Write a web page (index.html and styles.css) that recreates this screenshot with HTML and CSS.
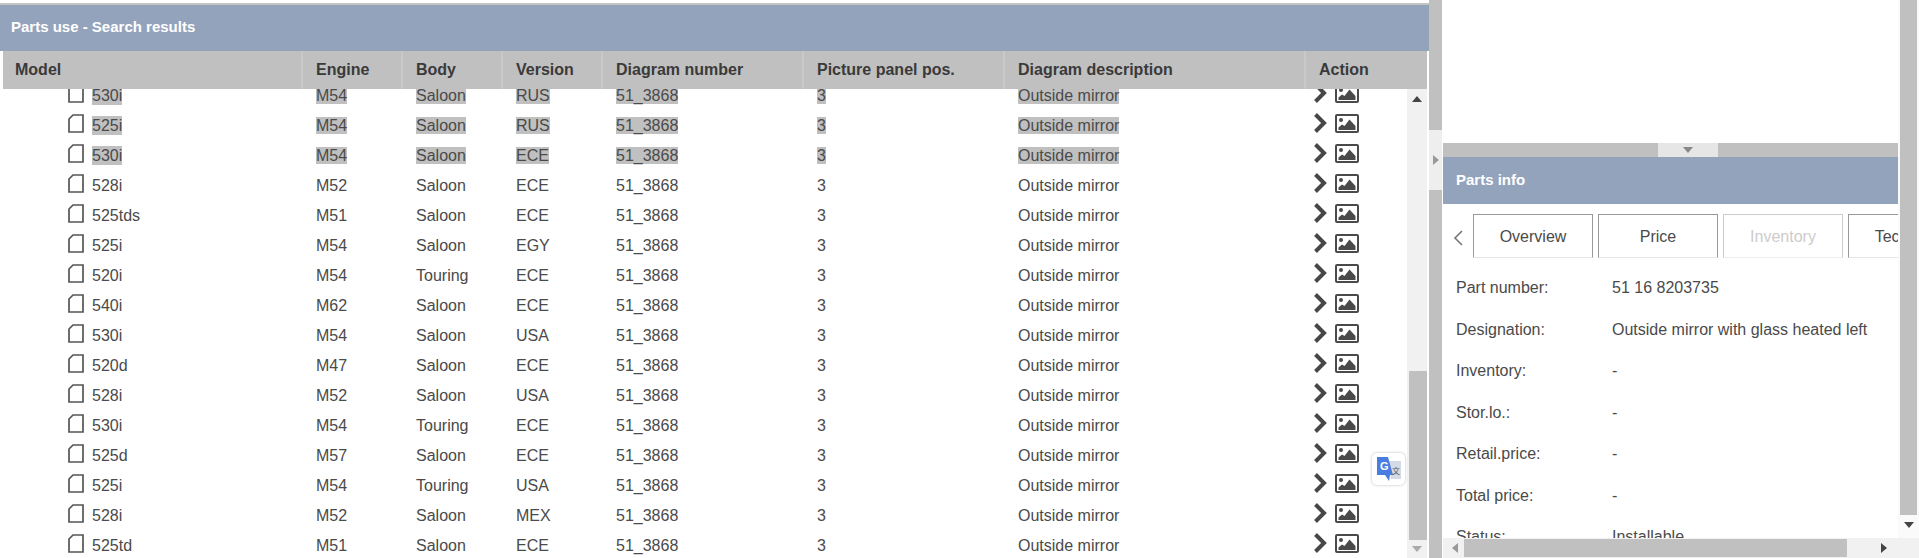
FILE: index.html
```html
<!DOCTYPE html>
<html lang="en">
<head>
  <meta charset="UTF-8" />
  <title>Parts use</title>
  <link rel="stylesheet" href="styles.css">
</head>
<body>
  <svg class="defs" width="0" height="0">
    <symbol id="doc" viewBox="0 0 16 19">
      <path d="M5 1H15V18H1V5Z" fill="none" stroke="#555" stroke-width="1.7" />
    </symbol>
    <symbol id="chev" viewBox="0 0 14 20">
      <path d="M2.5 1.5L11 10L2.5 18.5" fill="none" stroke="#474747" stroke-width="4" />
    </symbol>
    <symbol id="pic" viewBox="0 0 24 19">
      <rect x="1" y="1" width="22" height="17" rx="1" fill="#fff" stroke="#4a4a4a" stroke-width="2" />
      <circle cx="6" cy="6" r="2" fill="#4a4a4a" />
      <path d="M3.5 16V13.5L7 10.5L9.5 12L14.5 5.5L20.5 12V16Z" fill="#4a4a4a" />
    </symbol>
  </svg>

  <div class="pane-l">
    <div class="title">Parts use - Search results</div>
    <div class="head">
      <div class="h c-model">Model</div>
      <div class="h c-s">Engine</div>
      <div class="h c-s">Body</div>
      <div class="h c-s">Version</div>
      <div class="h c-m">Diagram number</div>
      <div class="h c-m">Picture panel pos.</div>
      <div class="h c-l">Diagram description</div>
      <div class="h">Action</div>
    </div>
    <div class="results">
      <div class="rows">
        <div class="row sel"><div class="c-model tree"><svg class="doc"><use href="#doc" /></svg><span>530i</span></div><div class="c-s"><span>M54</span></div><div class="c-s"><span>Saloon</span></div><div class="c-s"><span>RUS</span></div><div class="c-m"><span>51_3868</span></div><div class="c-m"><span>3</span></div><div class="c-l"><span>Outside mirror</span></div><div class="acts"><svg class="chev"><use href="#chev" /></svg><svg class="pic"><use href="#pic" /></svg></div></div>
        <div class="row sel"><div class="c-model tree"><svg class="doc"><use href="#doc" /></svg><span>525i</span></div><div class="c-s"><span>M54</span></div><div class="c-s"><span>Saloon</span></div><div class="c-s"><span>RUS</span></div><div class="c-m"><span>51_3868</span></div><div class="c-m"><span>3</span></div><div class="c-l"><span>Outside mirror</span></div><div class="acts"><svg class="chev"><use href="#chev" /></svg><svg class="pic"><use href="#pic" /></svg></div></div>
        <div class="row sel"><div class="c-model tree"><svg class="doc"><use href="#doc" /></svg><span>530i</span></div><div class="c-s"><span>M54</span></div><div class="c-s"><span>Saloon</span></div><div class="c-s"><span>ECE</span></div><div class="c-m"><span>51_3868</span></div><div class="c-m"><span>3</span></div><div class="c-l"><span>Outside mirror</span></div><div class="acts"><svg class="chev"><use href="#chev" /></svg><svg class="pic"><use href="#pic" /></svg></div></div>
        <div class="row"><div class="c-model tree"><svg class="doc"><use href="#doc" /></svg><span>528i</span></div><div class="c-s"><span>M52</span></div><div class="c-s"><span>Saloon</span></div><div class="c-s"><span>ECE</span></div><div class="c-m"><span>51_3868</span></div><div class="c-m"><span>3</span></div><div class="c-l"><span>Outside mirror</span></div><div class="acts"><svg class="chev"><use href="#chev" /></svg><svg class="pic"><use href="#pic" /></svg></div></div>
        <div class="row"><div class="c-model tree"><svg class="doc"><use href="#doc" /></svg><span>525tds</span></div><div class="c-s"><span>M51</span></div><div class="c-s"><span>Saloon</span></div><div class="c-s"><span>ECE</span></div><div class="c-m"><span>51_3868</span></div><div class="c-m"><span>3</span></div><div class="c-l"><span>Outside mirror</span></div><div class="acts"><svg class="chev"><use href="#chev" /></svg><svg class="pic"><use href="#pic" /></svg></div></div>
        <div class="row"><div class="c-model tree"><svg class="doc"><use href="#doc" /></svg><span>525i</span></div><div class="c-s"><span>M54</span></div><div class="c-s"><span>Saloon</span></div><div class="c-s"><span>EGY</span></div><div class="c-m"><span>51_3868</span></div><div class="c-m"><span>3</span></div><div class="c-l"><span>Outside mirror</span></div><div class="acts"><svg class="chev"><use href="#chev" /></svg><svg class="pic"><use href="#pic" /></svg></div></div>
        <div class="row"><div class="c-model tree"><svg class="doc"><use href="#doc" /></svg><span>520i</span></div><div class="c-s"><span>M54</span></div><div class="c-s"><span>Touring</span></div><div class="c-s"><span>ECE</span></div><div class="c-m"><span>51_3868</span></div><div class="c-m"><span>3</span></div><div class="c-l"><span>Outside mirror</span></div><div class="acts"><svg class="chev"><use href="#chev" /></svg><svg class="pic"><use href="#pic" /></svg></div></div>
        <div class="row"><div class="c-model tree"><svg class="doc"><use href="#doc" /></svg><span>540i</span></div><div class="c-s"><span>M62</span></div><div class="c-s"><span>Saloon</span></div><div class="c-s"><span>ECE</span></div><div class="c-m"><span>51_3868</span></div><div class="c-m"><span>3</span></div><div class="c-l"><span>Outside mirror</span></div><div class="acts"><svg class="chev"><use href="#chev" /></svg><svg class="pic"><use href="#pic" /></svg></div></div>
        <div class="row"><div class="c-model tree"><svg class="doc"><use href="#doc" /></svg><span>530i</span></div><div class="c-s"><span>M54</span></div><div class="c-s"><span>Saloon</span></div><div class="c-s"><span>USA</span></div><div class="c-m"><span>51_3868</span></div><div class="c-m"><span>3</span></div><div class="c-l"><span>Outside mirror</span></div><div class="acts"><svg class="chev"><use href="#chev" /></svg><svg class="pic"><use href="#pic" /></svg></div></div>
        <div class="row"><div class="c-model tree"><svg class="doc"><use href="#doc" /></svg><span>520d</span></div><div class="c-s"><span>M47</span></div><div class="c-s"><span>Saloon</span></div><div class="c-s"><span>ECE</span></div><div class="c-m"><span>51_3868</span></div><div class="c-m"><span>3</span></div><div class="c-l"><span>Outside mirror</span></div><div class="acts"><svg class="chev"><use href="#chev" /></svg><svg class="pic"><use href="#pic" /></svg></div></div>
        <div class="row"><div class="c-model tree"><svg class="doc"><use href="#doc" /></svg><span>528i</span></div><div class="c-s"><span>M52</span></div><div class="c-s"><span>Saloon</span></div><div class="c-s"><span>USA</span></div><div class="c-m"><span>51_3868</span></div><div class="c-m"><span>3</span></div><div class="c-l"><span>Outside mirror</span></div><div class="acts"><svg class="chev"><use href="#chev" /></svg><svg class="pic"><use href="#pic" /></svg></div></div>
        <div class="row"><div class="c-model tree"><svg class="doc"><use href="#doc" /></svg><span>530i</span></div><div class="c-s"><span>M54</span></div><div class="c-s"><span>Touring</span></div><div class="c-s"><span>ECE</span></div><div class="c-m"><span>51_3868</span></div><div class="c-m"><span>3</span></div><div class="c-l"><span>Outside mirror</span></div><div class="acts"><svg class="chev"><use href="#chev" /></svg><svg class="pic"><use href="#pic" /></svg></div></div>
        <div class="row"><div class="c-model tree"><svg class="doc"><use href="#doc" /></svg><span>525d</span></div><div class="c-s"><span>M57</span></div><div class="c-s"><span>Saloon</span></div><div class="c-s"><span>ECE</span></div><div class="c-m"><span>51_3868</span></div><div class="c-m"><span>3</span></div><div class="c-l"><span>Outside mirror</span></div><div class="acts"><svg class="chev"><use href="#chev" /></svg><svg class="pic"><use href="#pic" /></svg></div></div>
        <div class="row"><div class="c-model tree"><svg class="doc"><use href="#doc" /></svg><span>525i</span></div><div class="c-s"><span>M54</span></div><div class="c-s"><span>Touring</span></div><div class="c-s"><span>USA</span></div><div class="c-m"><span>51_3868</span></div><div class="c-m"><span>3</span></div><div class="c-l"><span>Outside mirror</span></div><div class="acts"><svg class="chev"><use href="#chev" /></svg><svg class="pic"><use href="#pic" /></svg></div></div>
        <div class="row"><div class="c-model tree"><svg class="doc"><use href="#doc" /></svg><span>528i</span></div><div class="c-s"><span>M52</span></div><div class="c-s"><span>Saloon</span></div><div class="c-s"><span>MEX</span></div><div class="c-m"><span>51_3868</span></div><div class="c-m"><span>3</span></div><div class="c-l"><span>Outside mirror</span></div><div class="acts"><svg class="chev"><use href="#chev" /></svg><svg class="pic"><use href="#pic" /></svg></div></div>
        <div class="row"><div class="c-model tree"><svg class="doc"><use href="#doc" /></svg><span>525td</span></div><div class="c-s"><span>M51</span></div><div class="c-s"><span>Saloon</span></div><div class="c-s"><span>ECE</span></div><div class="c-m"><span>51_3868</span></div><div class="c-m"><span>3</span></div><div class="c-l"><span>Outside mirror</span></div><div class="acts"><svg class="chev"><use href="#chev" /></svg><svg class="pic"><use href="#pic" /></svg></div></div>
      </div>
      <div class="vbar">
        <div class="arrow a-up"></div>
        <div class="track"><div class="thumb list-thumb"></div></div>
        <div class="arrow a-down"></div>
      </div>
      <div class="translate">
        <svg width="24" height="24" viewBox="0 0 24 24">
          <path d="M10 4H24V22H14Z" fill="#d5dbe6" />
          <path d="M0 0H11L16 18H13L12 24L8 18H0Z" fill="#4a7de0" />
          <text class="t-g" x="3" y="13">G</text>
          <text class="t-a" x="15" y="17">文</text>
        </svg>
      </div>
    </div>
  </div>

  <div class="strip"><div class="strip-handle"><div class="arrow a-right a-grey"></div></div></div>

  <div class="pane-r">
    <div class="upper"></div>
    <div class="splitter"><div class="split-handle"><div class="arrow a-down a-grey"></div></div></div>
    <div class="title small">Parts info</div>
    <div class="tabs">
      <svg class="back" width="12" height="16" viewBox="0 0 12 16"><path d="M10 1L3 8L10 15" fill="none" stroke="#777" stroke-width="1.6" /></svg>
      <div class="tab">Overview</div>
      <div class="tab">Price</div>
      <div class="tab off">Inventory</div>
      <div class="tab">Technical</div>
    </div>
    <div class="info">
      <div class="line"><div class="lbl">Part number:</div><div>51 16 8203735</div></div>
      <div class="line"><div class="lbl">Designation:</div><div>Outside mirror with glass heated left</div></div>
      <div class="line"><div class="lbl">Inventory:</div><div>-</div></div>
      <div class="line"><div class="lbl">Stor.lo.:</div><div>-</div></div>
      <div class="line"><div class="lbl">Retail.price:</div><div>-</div></div>
      <div class="line"><div class="lbl">Total price:</div><div>-</div></div>
      <div class="line"><div class="lbl">Status:</div><div>Installable</div></div>
    </div>
    <div class="hbar">
      <div class="arrow a-left"></div>
      <div class="hthumb"></div>
      <div class="arrow a-right"></div>
    </div>
  </div>

  <div class="vbar outer">
    <div class="track"><div class="thumb full"></div></div>
    <div class="arrow a-down"></div>
    <div class="corner"></div>
  </div>
</body>
</html>
```

FILE: styles.css
```css
* { box-sizing: border-box; }
body {
  margin: 0;
  display: flex;
  height: 558px;
  overflow: hidden;
  background: #fff;
  color: #4a4a4a;
  font-family: 'Liberation Sans', Arial, sans-serif;
  font-size: 16px;
}
.defs { display: block; width: 0; flex: none; }

.pane-l {
  width: 1429px;
  flex: none;
  display: flex;
  flex-direction: column;
  padding-top: 3px;
}
.title {
  height: 48px;
  flex: none;
  padding-left: 11px;
  line-height: 44px;
  border-top: 2px solid #c4c4c4;
  background: #94a3bc;
  color: #fff;
  font-size: 15px;
  font-weight: bold;
}
.title.small {
  height: 47px;
  padding-left: 13px;
  line-height: 46px;
  border-top: none;
}
.head {
  display: flex;
  height: 38px;
  flex: none;
  margin: 0 2px 0 3px;
  background: #c0c0c0;
  color: #3a3a3a;
  font-weight: bold;
  line-height: 38px;
}
.h { padding-left: 13px; border-right: 2px solid #c9c9c9; }
.h:first-child { padding-left: 12px; }
.h:last-child { border-right: none; }
.c-model { width: 300px; flex: none; }
.c-s { width: 100px; flex: none; }
.c-m { width: 201px; flex: none; }
.c-l { width: 301px; flex: none; }

.results { flex: 1; display: flex; position: relative; overflow: hidden; }
.rows { width: 1407px; flex: none; margin-top: -9px; padding-left: 3px; }
.row { display: flex; height: 30px; align-items: center; line-height: 19px; }
.row > div { padding-left: 13px; }
.sel span { background: #c0c0c0; }
.tree { display: flex; align-items: center; }
.row .tree { padding-left: 65px; }
.doc { width: 16px; height: 19px; margin-right: 8px; margin-top: -3px; flex: none; }
.acts { display: flex; align-items: center; margin-top: -4px; }
.row .acts { padding-left: 7px; }
.chev { width: 14px; height: 20px; margin-right: 8px; }
.pic { width: 24px; height: 19px; }

.vbar {
  width: 20px;
  flex: none;
  display: flex;
  flex-direction: column;
  background: #f1f1f1;
}
.track { flex: 1; display: flex; flex-direction: column; justify-content: flex-end; }
.thumb { margin-left: 2px; background: #c0c0c0; }
.list-thumb { height: 169px; }
.results .vbar { padding-top: 7px; }
.results .a-up { margin: 0 auto; }
.results .a-down { margin: 6px auto; border-top-color: #aaa; }

.arrow { width: 0; height: 0; border-style: solid; border-color: transparent; flex: none; }
.a-up { border-width: 0 5px 6px; border-bottom-color: #444; }
.a-down { border-width: 6px 5px 0; border-top-color: #444; }
.a-right { border-width: 5px 0 5px 6px; border-left-color: #444; }
.a-left { border-width: 5px 6px 5px 0; border-right-color: #999; }
.a-down.a-grey { border-top-color: #888; }
.a-right.a-grey { border-left-color: #999; }

.translate {
  position: absolute;
  left: 1372px;
  top: 364px;
  width: 33px;
  height: 32px;
  display: flex;
  align-items: center;
  justify-content: center;
  background: #fff;
  border-radius: 5px;
  box-shadow: 0 0 3px #bbb;
}
.t-g { font-size: 11px; font-weight: bold; fill: #fff; }
.t-a { font-family: 'Noto Sans CJK SC', sans-serif; font-size: 8px; fill: #555; }

.strip {
  width: 13px;
  flex: none;
  background: #c0c0c0;
  margin-right: 1px;
}
.strip-handle {
  height: 60px;
  margin-top: 130px;
  display: flex;
  align-items: center;
  justify-content: center;
  background: #eee;
}

.pane-r {
  width: 455px;
  flex: none;
  display: flex;
  flex-direction: column;
  overflow: hidden;
}
.upper { height: 143px; flex: none; }
.splitter {
  height: 14px;
  flex: none;
  display: flex;
  justify-content: center;
  background: #c0c0c0;
}
.split-handle {
  width: 60px;
  margin-left: 34px;
  display: flex;
  align-items: center;
  justify-content: center;
  background: #e6e6e6;
}
.tabs {
  display: flex;
  align-items: flex-start;
  gap: 5px;
  height: 60px;
  flex: none;
  padding-top: 10px;
  padding-left: 9px;
}
.back { margin: 16px 4px 0 0; flex: none; }
.tab {
  width: 120px;
  height: 44px;
  flex: none;
  text-align: center;
  line-height: 44px;
  border: 1px solid #999;
  border-bottom-color: #e6e6e6;
}
.tab.off { color: #ccc; border-color: #ccc; border-bottom-color: #eee; }

.info { flex: 1; padding: 14px 0 0 13px; overflow: hidden; }
.line { display: flex; height: 41.5px; line-height: 20px; }
.lbl { width: 156px; flex: none; }

.hbar {
  height: 20px;
  flex: none;
  display: flex;
  align-items: center;
  background: #f1f1f1;
}
.hbar .a-left { margin-left: 9px; }
.hthumb { width: 383px; height: 18px; margin: 0 34px 0 6px; background: #c0c0c0; }

.outer { width: 21px; background: #fafafa; }
.outer .track { justify-content: flex-start; }
.full { height: 515px; margin: 0 2px; }
.outer .a-down { margin: 7px auto 10px; }
.corner { height: 20px; flex: none; background: #f1f1f1; }
```
